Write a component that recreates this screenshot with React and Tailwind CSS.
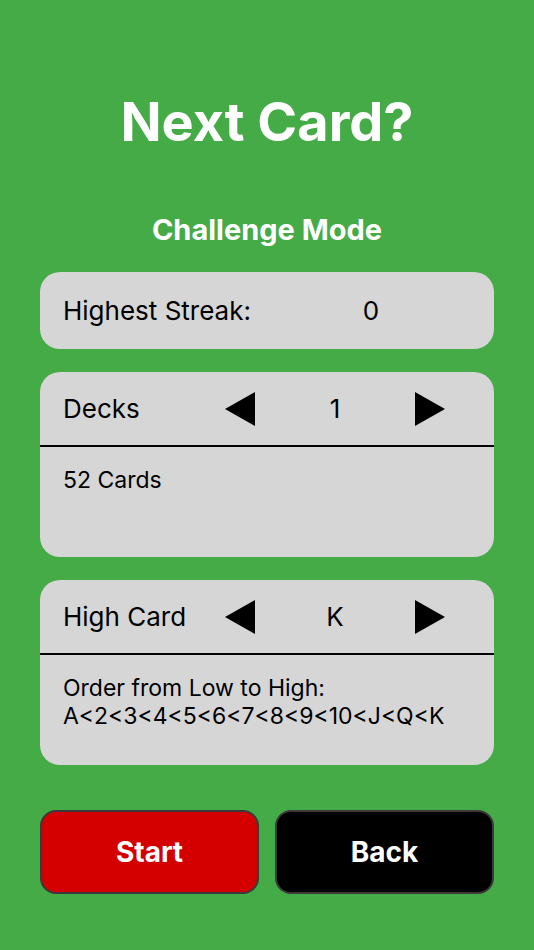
import { useState } from "react";

const Arrow = ({ dir }) => (
  <svg width="30" height="34" viewBox="0 0 30 34" className="block">
    {dir === "left" ? (
      <polygon points="30,0 30,34 0,17" fill="black" />
    ) : (
      <polygon points="0,0 0,34 30,17" fill="black" />
    )}
  </svg>
);

const Stepper = ({ label, value, children }) => (
  <div className="bg-[#d6d6d6] rounded-[20px] overflow-hidden">
    <div className="flex items-center h-[73px] pl-[23px]">
      <span className="w-[162px] text-[26px]">{label}</span>
      <button className="w-[30px] cursor-pointer"><Arrow dir="left" /></button>
      <span className="w-[160px] text-center text-[26px]">{value}</span>
      <button className="w-[30px] cursor-pointer"><Arrow dir="right" /></button>
    </div>
    <div className="border-t-[2px] border-black h-[112px] px-[23px] pt-[19px] text-[23px] leading-[28px]">
      {children}
    </div>
  </div>
);

export default function App() {
  const [decks] = useState(1);

  return (
    <div
      className="min-h-[950px] w-full bg-[#45ab47] flex flex-col px-[40px] text-black"
      style={{ fontFamily: "Inter, 'Noto Sans', sans-serif" }}
    >
      <h1 className="pt-[90px] text-center text-white font-bold text-[54px] leading-[64px]">
        Next Card?
      </h1>
      <h2 className="mt-[59px] text-center text-white font-bold text-[29px] leading-[34px]">
        Challenge Mode
      </h2>

      <div className="mt-[25px] bg-[#d6d6d6] rounded-[20px] h-[77px] flex items-center pl-[23px]">
        <span className="w-[270px] text-[26px]">Highest Streak:</span>
        <span className="w-[76px] text-center text-[26px]">0</span>
      </div>

      <div className="mt-[23px]">
        <Stepper label="Decks" value={decks}>
          <p>{decks * 52} Cards</p>
        </Stepper>
      </div>

      <div className="mt-[23px]">
        <Stepper label="High Card" value="K">
          <p>Order from Low to High:</p>
          <p>A&lt;2&lt;3&lt;4&lt;5&lt;6&lt;7&lt;8&lt;9&lt;10&lt;J&lt;Q&lt;K</p>
        </Stepper>
      </div>

      <div className="mt-[45px] flex gap-[16px]">
        <button className="flex-1 h-[84px] rounded-[16px] border-[2px] border-[#3a3a3a] bg-[#d40000] text-white font-bold text-[28px] cursor-pointer">
          Start
        </button>
        <button className="flex-1 h-[84px] rounded-[16px] border-[2px] border-[#3a3a3a] bg-black text-white font-bold text-[28px] cursor-pointer">
          Back
        </button>
      </div>
    </div>
  );
}
